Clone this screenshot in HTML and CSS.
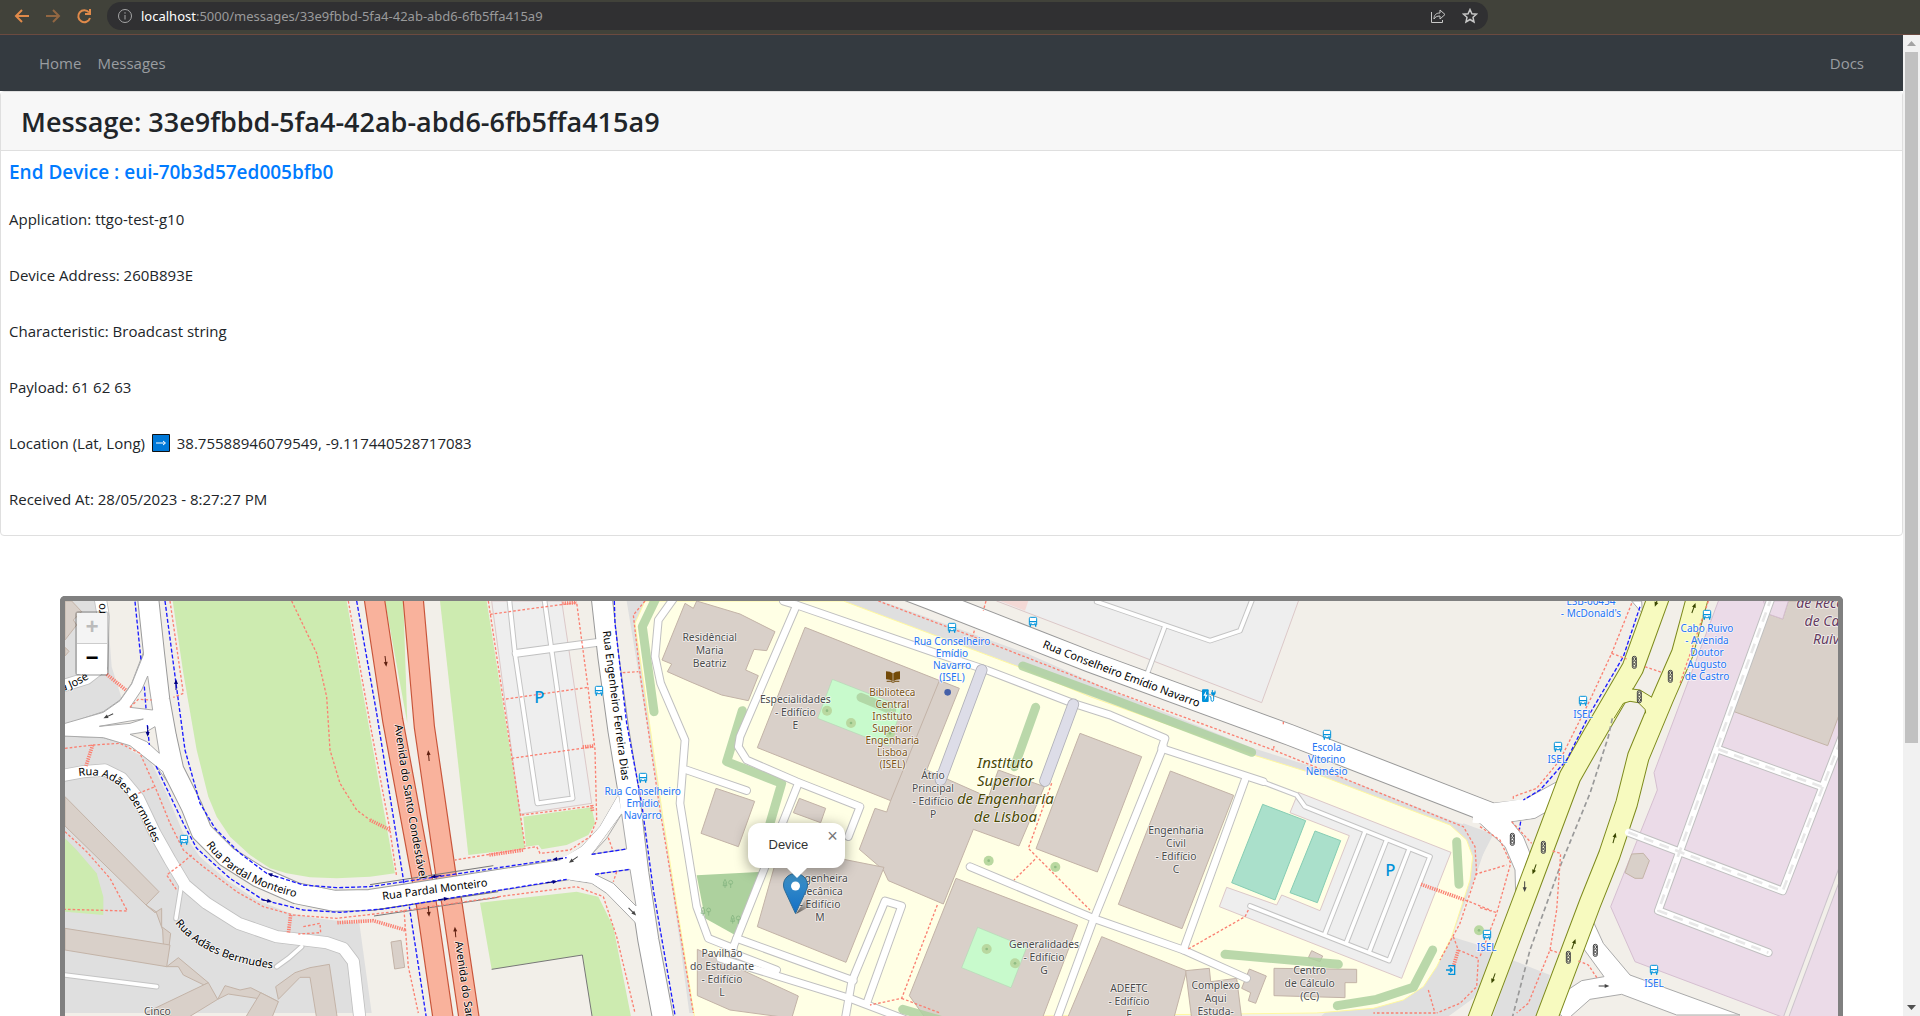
FILE: index.html
```html
<!DOCTYPE html>
<html lang="en">
<head>
<meta charset="utf-8">
<title>Message</title>
<link rel="stylesheet" href="styles.css">
</head>
<body>
<header class="toolbar">
  <button class="tool" aria-label="Back"><svg width="16" height="16" viewBox="0 0 16 16"><path d="M15 8H2M8 2L2 8l6 6"/></svg></button>
  <button class="tool tool-off" aria-label="Forward"><svg width="16" height="16" viewBox="0 0 16 16"><path d="M1 8h13M8 2l6 6-6 6"/></svg></button>
  <button class="tool" aria-label="Reload"><svg width="16" height="16" viewBox="0 0 16 16"><path d="M13 4.500A6 6 0 1 0 14 10M14 1v5H9"/></svg></button>
  <div class="address">
    <svg class="info" width="16" height="16" viewBox="0 0 16 16"><circle cx="8" cy="8" r="6.500"/><path d="M8 7v4.500M8 4.200v1.500"/></svg>
    <div class="url"><b>localhost</b>:5000/messages/33e9fbbd-5fa4-42ab-abd6-6fb5ffa415a9</div>
    <button class="tool tool-light" aria-label="Share"><svg width="16" height="16" viewBox="0 0 16 16"><path d="M1.500 4v10.500h11V12M4 11c0-4 2-6 6-6V2l5 4.500-5 4.500V8C7 8 5 9 4 11z"/></svg></button>
    <button class="tool tool-light" aria-label="Bookmark"><svg width="16" height="16" viewBox="0 0 16 16"><path stroke-width="1.500" d="M8 1.500l1.900 4.300 4.600.4-3.500 3.100 1 4.700-4-2.500-4 2.500 1-4.700L1.500 6.200l4.600-.4z"/></svg></button>
  </div>
</header>
<div class="window">
  <main class="page">
    <nav class="navbar">
      <a href="#home">Home</a>
      <a href="#messages">Messages</a>
      <a class="nav-end" href="#docs">Docs</a>
    </nav>
    <section class="card">
      <h3 class="card-header">Message: 33e9fbbd-5fa4-42ab-abd6-6fb5ffa415a9</h3>
      <div class="card-body">
        <h5><a href="#device">End Device : eui-70b3d57ed005bfb0</a></h5>
        <p>Application: ttgo-test-g10</p>
        <p>Device Address: 260B893E</p>
        <p>Characteristic: Broadcast string</p>
        <p>Payload: 61 62 63</p>
        <p>Location (Lat, Long) <svg class="arrow-box" width="18" height="18" viewBox="0 0 18 18"><path class="arrow-bg" d="M.5.5h17v17H.5z"/><path class="arrow-line" d="M4 9h9M11 7l2.500 2-2.500 2"/></svg> 38.75588946079549, -9.117440528717083</p>
        <p>Received At: 28/05/2023 - 8:27:27 PM</p>
      </div>
    </section>
    <section class="map">
      <svg id="map" class="map-canvas" viewBox="195 33 5319 1245" preserveAspectRatio="xMidYMin slice">
        <defs>
          <g id="bus"><path d="M-8-14H8q3 0 3 4V8H-11V-10q0-4 3-4z" fill="#fff" stroke="#0092da" stroke-width="3"/><path d="M-11-1H11M-8 8v6M8 8v6" stroke="#0092da" stroke-width="4"/><path d="M-8 5h4M4 5h4" stroke="#0092da" stroke-width="3"/></g>
          <g id="light" fill="none" stroke="#444" stroke-width="3"><rect x="-6" y="-18" width="12" height="36" rx="5" fill="#fff" fill-opacity=".4"/><circle cy="-10" r="4"/><circle r="4"/><circle cy="10" r="4"/></g>
          <g id="arrow"><path d="M-16 0H6" fill="none" stroke="currentColor" stroke-width="3"/><path d="M16 0L2-6V6z" fill="currentColor"/></g>
          <g id="trees" fill="none" stroke="#7fb07c" stroke-width="2"><path d="M-9 14V-2M-9-12l-5 10 2 0-3 9H-3L-6-2h2z"/><path d="M8 14V0M2-2a6 7 0 1 1 12 0q0 5-6 5t-6-5z"/></g>
        </defs>
      </svg>
      <div class="zoom">
        <button class="zoom-in" aria-label="Zoom in" disabled>+</button>
        <button class="zoom-out" aria-label="Zoom out">−</button>
      </div>
      <svg class="marker" width="44" height="42" viewBox="0 0 44 42">
        <defs>
          <linearGradient id="pin" x1="0" y1="0" x2="0" y2="1"><stop offset="0" stop-color="#3f93c8"/><stop offset="1" stop-color="#126fc6"/></linearGradient>
          <linearGradient id="shade" x1="0" y1="1" x2="1" y2="0"><stop offset="0" stop-color="#000" stop-opacity=".6"/><stop offset=".6" stop-color="#000" stop-opacity="0"/></linearGradient>
        </defs>
        <path d="M13 41L24 24Q38 16 38 22T13 41z" fill="url(#shade)"/>
        <path d="M12.500.5C6 .5.5 5.500.5 12c0 3 1 5 2 7l10 21.500 10-21.500c1-2 2-4 2-7C24.500 5.500 19 .5 12.500.5z" fill="url(#pin)" stroke="#2e6c97"/>
        <circle cx="12.500" cy="13" r="4.500" fill="#fff"/>
      </svg>
      <div class="popup">Device<button class="popup-close" aria-label="Close">×</button></div>
    </section>
  </main>
  <div class="scrollbar">
    <svg width="9" height="5" viewBox="0 0 9 5"><path fill="#a3a3a3" d="M0 5L4.500 0 9 5z"/></svg>
    <div class="track"><div class="thumb"></div></div>
    <svg width="9" height="5" viewBox="0 0 9 5"><path fill="#505050" d="M0 0h9L4.500 5z"/></svg>
  </div>
</div>
<script src="map.js"></script>
</body>
</html>
```

FILE: styles.css
```css
* { box-sizing: border-box; }
body {
  margin: 0;
  height: 100vh;
  display: flex;
  flex-direction: column;
  overflow: hidden;
  background: #fff;
  color: #212529;
  font: 16px/24px "Open Sans", "Noto Sans", sans-serif;
}
button { padding: 0; border: 0; background: none; font: inherit; }
a { text-decoration: none; }

.toolbar {
  flex: none;
  display: flex;
  align-items: center;
  gap: 15px;
  height: 35px;
  padding: 0 14px 2px;
  background: #41423a;
  border-bottom: 1px solid #6b4a40;
}
.tool { display: flex; fill: none; stroke: #e08a4a; stroke-width: 2; }
.tool-off { opacity: .5; }
.tool-light { stroke: #c8c8c8; stroke-width: 1; }
.address {
  display: flex;
  align-items: center;
  gap: 16px;
  width: 73%;
  height: 28px;
  padding: 0 10px;
  border-radius: 14px;
  background: #303032;
  color: #9a9a9b;
  font-family: "Noto Sans", sans-serif;
  font-size: 13px;
}
.info { fill: none; stroke: #a5a5a6; margin-right: -8px; stroke-width: 1; }
.url { flex: 1; white-space: nowrap; }
.url b { color: #fff; font-weight: 400; }

.window { flex: 1; min-height: 0; display: flex; }
.page { flex: 1; min-width: 0; display: flex; flex-direction: column; overflow: hidden; }
.navbar {
  flex: none;
  display: flex;
  gap: 16px;
  align-items: center;
  height: 56px;
  padding: 0 39px;
  background: #343a40;
}
.navbar a { color: #9a9da0; font-size: 15px; }
.nav-end { margin-left: auto; }

.card { flex: none; border: 1px solid #dfdfdf; border-radius: 4px; }
.card-header {
  margin: 0;
  padding: 13px 20px 11px;
  background: #f7f7f7;
  border-bottom: 1px solid #dfdfdf;
  font-size: 27px;
  line-height: 34px;
  font-weight: 600;
}
.card-body { padding: 9px 8px 8px; }
.card-body h5 { margin: 0 0 7px; font-size: 19px; line-height: 24px; font-weight: 600; }
.card-body a { color: #007bff; }
.card-body p { margin: 0; padding: 16px 0; font-size: 15px; line-height: 24px; }
.arrow-box { vertical-align: -3px; margin: 0 3px; }
.arrow-bg { fill: #0078d7; stroke: #111; stroke-width: 1; }
.arrow-line { fill: none; stroke: #fff; stroke-width: 1; }

.map {
  position: relative;
  flex: 1;
  min-height: 0;
  margin: 60px 60px 0;
  border: 5px solid #808080;
  border-bottom: 0;
  border-radius: 5px 5px 0 0;
  overflow: hidden;
  background: #f2efe9;
}
.map-canvas { display: block; width: 100%; height: 100%; font-family: "Noto Sans", "Open Sans", sans-serif; }
.zoom {
  position: absolute;
  left: 10px;
  top: 10px;
  display: flex;
  flex-direction: column;
  border: 2px solid rgba(0, 0, 0, .2);
  border-radius: 4px;
}
.zoom button {
  width: 30px;
  height: 30px;
  background: #fff;
  color: #000;
  font: bold 22px/32px "Liberation Mono", monospace;
}
.zoom .zoom-in { height: 31px; background: #f4f4f4; color: #bbb; border-bottom: 1px solid #ccc; }
.marker { position: absolute; left: calc(50% - 169px); top: 272px; }
.popup {
  position: absolute;
  left: calc(50% - 204px);
  top: 222px;
  width: 97px;
  height: 45px;
  padding: 13px 21px;
  border-radius: 12px;
  background: #fff;
  color: #333;
  font: 13px/18px "Liberation Sans", sans-serif;
  box-shadow: 0 3px 14px rgba(0, 0, 0, .4);
}
.popup::after {
  content: "";
  position: absolute;
  left: 39px;
  top: 45px;
  border: 10px solid transparent;
  border-top-color: #fff;
}
.popup-close { position: absolute; right: 0; top: 0; width: 24px; height: 24px; color: #757575; font: 18px/26px "Liberation Sans", sans-serif; }

.scrollbar {
  flex: none;
  display: flex;
  flex-direction: column;
  align-items: center;
  gap: 6px;
  width: 17px;
  padding: 6px 0;
  background: #f1f1f1;
}
.track { flex: 1; width: 13px; }
.thumb { height: 73%; background: #c1c1c1; }

/* areas */
.residential { fill: #dfdfdf; }
.park { fill: #cdebb0; }
.campus { fill: #ffffe5; stroke: #fff8a0; stroke-width: 3; }
.commerce { fill: #ebdbe8; stroke: #d5bfd0; stroke-width: 3; }
.retail { fill: #f4d9d6; }
.parking { fill: #eee; stroke: #dcc8c8; stroke-width: 3; }
.building { fill: #d9d0c9; stroke: #c3b3a7; stroke-width: 3; }
.garden { fill: #c8facc; stroke: #b5d6b5; stroke-width: 2; }
.pitch { fill: #aae0cb; stroke: #86cdb3; stroke-width: 3; }
.wood { fill: #add19e; }
.base { fill: #f2efe9; }
.hedge { fill: none; stroke: #aed1a0; stroke-opacity: .85; stroke-width: 27; stroke-linecap: round; stroke-linejoin: round; }
.tree { fill: #b9d8a0; }
.tree-dot { fill: #8fbc82; }
.hall { fill: none; stroke: #dddde8; stroke-width: 30; stroke-linecap: round; }
.hall-edge { fill: none; stroke: #b0b0b8; stroke-width: 35; stroke-linecap: round; }
.junction { fill: #fff; stroke: #aaa; stroke-width: 3; }
.island { fill: #f2efe9; stroke: #aaa; stroke-width: 3; }

/* lines */
.road, .edge { fill: none; stroke-linejoin: round; }
.aisle { stroke: #fff; stroke-width: 11; }
.aisle-edge { stroke: #c4c4c4; stroke-width: 17; stroke-linecap: round; }
.aisle, .service, .lane { stroke-linecap: round; }
.service { stroke: #fff; stroke-width: 20; }
.service-edge { stroke: #c0c0c0; stroke-width: 26; stroke-linecap: round; }
.lane { stroke: #fff; stroke-width: 34; }
.lane-edge { stroke: #c0c0c0; stroke-width: 39; stroke-linecap: round; }
.street { stroke: #fff; stroke-width: 60; }
.street-edge { stroke: #999; stroke-width: 66; }
.trunk { stroke: #f9b29c; stroke-width: 57; }
.trunk-edge { stroke: #c8553a; stroke-width: 64; }
.avenue { stroke: #f7fabf; stroke-width: 62; }
.avenue-edge { stroke: #7d8a1c; stroke-width: 68; }
.crossing { fill: #f7fabf; }
.kerb { stroke: #7d8a1c; stroke-width: 3; }
.foot { stroke: #fa8072; stroke-width: 4; stroke-dasharray: 8 6; }
.steps { stroke: #fa8072; stroke-width: 11; stroke-dasharray: 4 3; }
.cycle { stroke: #1a1aff; stroke-width: 4; stroke-dasharray: 12 6; }
.metro { stroke: #999; stroke-width: 5; stroke-dasharray: 15 9; }
.yard-dash { stroke: #e8e8e8; stroke-width: 8; stroke-dasharray: 30 20; }
.rail { stroke: #777; stroke-width: 3; }
.seam { stroke: #c3b3a7; stroke-width: 3; }
.rim { stroke: #ccc4cc; stroke-width: 18; }
.path { stroke: #f2efe9; stroke-width: 12; }

/* labels */
.label { text-anchor: middle; paint-order: stroke; stroke: #fff; stroke-opacity: .7; stroke-width: 5; stroke-linejoin: round; }
.name { fill: #4c4c4c; font-size: 31px; }
.stop { fill: #2474f5; font-size: 30px; }
.library { fill: #7b5518; font-size: 30px; }
.uni { fill: #4a4a05; font-size: 45px; font-style: italic; }
.yard { fill: #643a60; font-size: 42px; font-style: italic; }
.road-name { fill: #000; font-size: 33px; text-anchor: start; }
.letter { fill: #0092da; font-size: 50px; font-weight: 500; text-anchor: middle; }
```

FILE: map.js
```js
// Horizontal origins of the five map sheets, west to east.
const SHEETS = [150, 1200, 2220, 3270, 4440];
const layers = { area: '', edge: '', road: '', top: '', line: '', text: '' };
const put = (layer, sheet, body) => {
  layers[layer] += `<g transform="translate(${SHEETS[sheet]} 0)">${body}</g>`;
};
const area = (s, cls, pts, layer = 'area') => put(layer, s, `<polygon class="${cls}" points="${pts}"/>`);
const line = (s, cls, pts, layer = 'line') => put(layer, s, `<polyline class="road ${cls}" points="${pts}"/>`);
const road = (s, cls, pts, edge = 'edge', top = 'road') => {
  put(edge, s, `<polyline class="edge ${cls}-edge" points="${pts}"/>`);
  line(s, cls, pts, top);
};
const hedge = (s, pts) => put('area', s, `<polyline class="hedge" points="${pts}"/>`);
const tree = (s, x, y) => put('area', s, `<circle class="tree" cx="${x}" cy="${y}" r="15"/><circle class="tree-dot" cx="${x}" cy="${y}" r="4"/>`);
const icon = (s, id, x, y, turn = 0, color = '#333') =>
  put('text', s, `<use href="#${id}" color="${color}" transform="translate(${x} ${y}) rotate(${turn})"/>`);
const label = (s, cls, x, y, step, ...rows) =>
  put('text', s, rows.map((r, i) => `<text class="label ${cls}" x="${x}" y="${y + i * step}">${r}</text>`).join(''));
let count = 0;
const along = (s, d, text) => {
  const id = 'way' + count++;
  put('text', s, `<path id="${id}" d="${d}" fill="none"/><text class="label road-name"><textPath href="#${id}">${text}</textPath></text>`);
};

// --- Ground ---
area(0, 'residential', '45,33 170,33 185,230 215,325 240,480 300,510 345,600 400,730 450,800 530,870 620,930 720,970 800,985 928,1000 965,1269 45,1269');
area(0, 'park', '45,745 80,780 140,850 160,920 160,975 45,965');
area(0, 'park', '368,33 890,33 1035,850 960,860 860,865 780,862 710,850 660,835 600,795 540,740 500,680 475,620 440,480 400,250');
area(0, 'park', '1005,33 1060,33 1072,400');
area(1, 'park', '120,33 260,33 362,680 375,775 205,795');
area(1, 'park', '370,680 575,652 585,700 565,735 500,765 425,778 415,765 378,770');
area(1, 'park', '240,938 530,905 595,920 640,1010 695,1290 578,1290 547,1095 275,1138');
line(1, 'rail', '275,1138 547,1095 578,1290', 'area');
area(1, 'parking', '275,33 485,33 575,640 360,672');
area(1, 'residential', '680,33 745,33 710,90 730,260 790,690 885,1269 868,1269 840,1060 780,640');
area(2, 'residential', '310,33 425,33 860,190 1110,300 1540,475 1750,540 2130,690 2250,730 2210,850 2190,950 1900,900 1540,500 840,235');
area(3, 'residential', '1120,700 1210,733 1150,850 1130,1050 1215,1080 1215,1110 1150,1225 1060,1290 680,1290 900,1100 1100,800');
area(3, 'base', '1160,850 1215,770 1215,1080 1085,1040');
area(2, 'campus', '-285,33 -315,100 -290,270 -230,690 -135,1290 1730,1269 1900,1255 1990,1230 2050,1190 2090,1130 2135,1040 2190,870 2198,800 2180,750 2130,705 1750,560 1540,495 1050,320 840,232 310,33');
area(2, 'parking', '860,20 1680,20 1565,338 1050,140 770,33');
area(2, 'retail', '780,33 865,33 855,62');
area(4, 'commerce', '720,20 1090,20 1090,1350 465,1115 392,950 532,600 522,548');
area(4, 'residential', '97,1110 210,1155 165,1300 30,1300');

// --- Buildings ---
area(0, 'building', '45,620 327,905 288,945 45,708');
area(0, 'building', '288,945 315,968 335,955 335,1010 362,1030 357,1070 340,1065 338,1020 318,965');
area(0, 'building', '45,1015 360,1065 350,1130 45,1080');
area(0, 'building', '350,1130 385,1103 475,1178 462,1185 400,1155 385,1130');
area(0, 'building', '285,1269 475,1178 503,1228 410,1285');
area(0, 'building', '503,1228 525,1187 570,1200 602,1193 685,1235 620,1225 535,1212');
area(0, 'building', '585,1285 632,1208 685,1235 665,1285');
area(0, 'building', '677,1190 735,1148 780,1133 838,1123 862,1285 800,1285 780,1162 750,1162 685,1228');
area(0, 'building', '1023,1056 1053,1051 1064,1132 1034,1137');
area(0, 'building', '45,33 65,33 95,65 70,90 80,105 45,150');
area(0, 'building', '45,172 57,184 45,198');
area(1, 'building', '855,40 880,55 890,33 1020,72 1125,125 1100,182 1062,178 1037,240 1075,257 1045,332 965,315 870,275 802,245 815,222 786,210');
area(1, 'building', '948,595 1064,634 1015,770 903,730');
area(1, 'building', '892,1078 1195,1218 1175,1285 990,1260 892,1217');
area(2, 'building', '195,112 658,295 560,540 745,622 775,540 913,590 837,768 700,718 610,942 445,872 430,840 358,778 405,655 440,666 452,632 52,473');
line(2, 'seam', '598,272 452,632', 'area');
area(2, 'building', '178,625 257,655 242,698 160,668');
area(2, 'building', '120,770 432,832 318,1117 52,1010');
area(2, 'building', '648,865 1013,1005 905,1290 560,1290 508,1217');
area(2, 'building', '1020,430 1205,500 1072,846 888,776');
area(3, 'building', '241,543 431,616 276,1016 85,943');
area(3, 'building', '35,1040 290,1142 250,1290 -70,1290');
area(3, 'building', '287,1142 358,1135 362,1175 440,1165 455,1285 305,1285');
area(3, 'building', '478,1137 529,1158 497,1240 475,1232 482,1208 455,1195');
area(3, 'building', '552,1135 800,1138 800,1178 765,1178 765,1223 552,1217');
area(3, 'building', '665,1082 698,1098 690,1115 655,1103');
area(4, 'building', '865,72 908,87 925,33 1090,33 1090,340 1043,467 757,363');
area(4, 'building', '455,792 490,790 508,812 488,865 465,865 435,848');
area(4, 'commerce', '850,33 925,33 908,87 865,72');

// --- Green details, pitches ---
area(2, 'garden', '277,268 487,350 445,468 233,385');
area(2, 'garden', '713,1012 860,1072 813,1193 665,1133');
hedge(2, '363,322 455,360');
[[261, 362], [333, 399], [450, 430], [746, 812], [946, 831], [740, 1077], [825, 1120]].forEach(([x, y]) => tree(2, x, y));
tree(3, 1167, 1021);
area(1, 'wood', '890,856 1090,845 1005,1035 915,985');
hedge(1, '770,20 727,110 762,365');
hedge(1, '1027,362 980,515 1145,580 1110,700');
hedge(2, '887,352 823,530');
hedge(2, '848,228 1110,325 1535,487');
hedge(2, '488,1258 600,1290');
hedge(3, '1100,755 1107,883');
hedge(3, '405,1093 745,1123');
hedge(3, '1028,1080 970,1192 860,1228 742,1247');
area(3, 'parking', '625,607 1083,787 935,1165 388,950 410,892 560,945 575,915 690,962 778,737 600,668');
area(3, 'pitch', '518,643 647,692 555,930 425,878');
area(3, 'pitch', '675,723 752,752 682,938 600,908');

// --- Small roads ---
['327,20 345,190 412,640 518,625 432,20'].forEach(p => road(1, 'aisle', p));
road(1, 'service', '348,190 610,155');
['520,577 620,615 645,650 1020,800 897,1112 480,948', '825,725 705,1030', '890,750 770,1055', '957,778 838,1085',
  '20,35 360,152 450,122 490,20', '225,108 172,250'].forEach(p => road(3, 'aisle', p));
['825,20 775,90 765,200 782,280 855,450 840,640 890,950 925,1045 1000,1075', '860,540 1040,602', '1000,1090 1130,1140'].forEach(p => road(1, 'service', p));
['170,45 0,440 -5,470 20,510 170,575 360,650 325,740', '175,580 -20,1070', '130,33 170,45 590,190 740,240 1000,340 1110,375 1275,445 1265,475 1570,575',
  '1270,470 1060,990 950,1290', '1515,570 1330,1080', '690,830 1060,985 1330,1080 1520,1165', '-10,1045 340,1172', '-60,1105 330,1225 500,1290',
  '315,1290 335,1175 435,933 485,948 380,1240'].forEach(p => road(2, 'service', p));
['45,1155 320,1190', '378,985 395,880', '680,1130 715,1105 755,1070'].forEach(p => road(0, 'aisle', p));
road(0, 'lane', '20,560 100,545 165,540 215,565 265,625 315,730 360,810 405,885 470,940 565,1000 680,1040 830,1058 880,1075 910,1115 930,1290');
road(0, 'lane', '150,20 160,80 155,230 110,265 30,290');

// --- Streets ---
area(0, 'junction', '45,403 160,365 210,330 245,280 283,180 305,250 308,360 240,352 250,370 300,375 318,410 325,490 240,433 345,550 370,600 320,530 240,465 160,443 45,438', 'edge');
area(0, 'junction', '35,403 160,367 210,332 245,282 285,182 330,300 360,520 345,550 320,530 240,467 160,443 35,438', 'road');
area(0, 'island', '293,258 308,360 240,352 275,300', 'top');
area(0, 'island', '148,409 240,393 280,387 240,400', 'top');
area(0, 'island', '315,410 328,490 290,455 240,433 290,425', 'top');
road(0, 'street', '294,20 312,190 328,330 348,440 370,540 425,650 455,725 530,800 625,860 740,910 850,932 960,930 1060,915 1550,838 1750,805');
road(1, 'street', '605,20 625,200 655,420 688,620 715,850 745,1050 790,1290');
put('edge', 1, '<path class="junction" d="M655 615L600 710 545 770 490 805 510 870 575 880 620 910 720 1012 745 940 700 920 640 880 585 853 700 835 690 775 575 793 665 670z"/>');
put('road', 1, '<path fill="#fff" d="M655 615L600 710 545 770 480 808 500 868 575 878 620 907 718 1008 745 940 700 920 640 880 585 853 700 835 690 775 575 793 665 670z"/>');
area(1, 'island', '575,793 620,745 665,672 680,777', 'top');
area(1, 'island', '585,853 690,838 708,948 640,880', 'top');
road(2, 'street', '500,0 570,27 1050,215 1650,435 2250,668');
area(4, 'junction', '-20,638 25,641 130,630 240,570 200,665 165,685 95,695 130,740 150,790 107,910 105,840 75,770 0,700 -20,690', 'edge');
area(4, 'junction', '340,995 370,1060 450,1155 780,1275 590,1275 425,1213 330,1228 260,1290 235,1269 255,1205 305,1172 372,1160 310,1075', 'edge');
line(4, 'street', '-20,668 30,672 150,655', 'road');
area(4, 'junction', '455,33 485,33 487,70', 'edge');
road(4, 'avenue', '536,20 458,235 338,440 270,560 135,920 -5,1290');
road(4, 'avenue', '653,20 607,190 548,325 475,500 440,640 388,795 330,940 198,1290');
area(4, 'crossing', '440,285 457,297 480,300 516,322 545,330 500,368 495,358 475,338 450,334 430,340 405,378 385,360', 'road');
line(4, 'kerb', '456,297 480,300 516,322', 'road');
line(4, 'kerb', '402,385 430,340 450,334 475,338 495,358 497,370', 'road');
const yard = ['875,20 535,962 865,1088', '715,478 1025,590', '445,727 908,903 1090,430'];
yard.forEach(p => road(4, 'service', p));
yard.forEach(p => line(4, 'yard-dash', p, 'top'));
line(4, 'rim', '1090,820 915,1290', 'area');
line(4, 'path', '1090,820 915,1290', 'area');
line(4, 'metro', '397,385 385,440 330,610 240,830 150,1080 95,1290', 'top');

// --- Trunk road, below the bridge ---
road(1, 'trunk', '-78,20 -22,390 67,870 82,960 130,1290', 'area', 'area');
road(1, 'trunk', '39,20 73,410 137,850 155,935 208,1290', 'area', 'area');
line(1, 'rail', '-90,884 280,827');
line(1, 'rail', '-78,960 295,905');
line(1, 'rail', '-78,978 295,922');

// --- Cycle and foot paths ---
['255,35 273,210', '283,290 288,355', '292,405 298,465', '345,33 378,280 405,480 450,640 495,715 570,790 650,850 760,885 860,893 960,890 1550,803',
  '318,528 400,700 440,775 540,865 640,930 760,960 870,967 1000,957 1550,868', '920,33 980,370 1062,880', '1078,950 1130,1290'].forEach(p => line(0, 'cycle', p));
['643,33 645,100 680,400 725,640 760,900 825,1275', '575,793 680,777', '585,853 690,838'].forEach(p => line(1, 'cycle', p));
['480,50 430,200 330,370 260,510 180,600 130,630', '122,695 118,720'].forEach(p => line(4, 'cycle', p));
['360,33 400,310 370,322', '725,33 800,190 830,320 840,480 870,580 920,660 960,690', '895,33 960,400 1020,720 1040,860', '45,475 130,465 210,460 270,490 315,590 360,700 400,780 460,830 560,905 640,950 730,975 860,985 1060,962 1350,920',
  '240,352 265,328 305,330', '265,610 315,590', '45,725 110,785 180,865 232,963 45,958', '425,795 390,825 350,855 380,900', '760,1010 810,1000 812,1028 745,1032', '1062,960 1075,1130 1105,1269'].forEach(p => line(0, 'foot', p));
['170,253 230,302', '128,465 108,528', '722,975 715,1030', '960,690 1020,720', '862,998 970,992 1066,1020'].forEach(p => line(0, 'steps', p));
['265,33 310,330 362,680 375,770', '270,73 400,55 530,38 565,300 585,480 590,690 570,740 510,780 420,790 410,770 165,810', '318,327 565,292', '335,505 580,470', '365,675 578,648', '668,248 715,245', '735,33 700,75 720,250 780,660 880,1269',
  '295,920 530,890 610,920 650,1040 705,1269', '625,743 638,780', '650,845 640,875'].forEach(p => line(1, 'foot', p));
['487,40 530,38', '548,471 582,468', '268,795 370,780', '575,645 578,665'].forEach(p => line(1, 'steps', p));
['415,33 700,140 1110,300 1600,480 2170,710 2205,770 2210,850 2160,1000 2100,1110', '738,33 730,62', '703,122 698,140', '935,580 865,775 1050,960', '885,808 822,870', '592,945 485,1225 390,1245', '485,1225 600,1269'].forEach(p => line(2, 'foot', p));
['295,1077 465,980 475,960', '1125,930 1205,962', '1155,853 1250,825', '1090,1040 1105,1080 1165,1105 1160,1190 1110,1240 1040,1269', '1015,1200 1035,1269 850,1269', '580,395 580,403', '552,468 550,480'].forEach(p => line(3, 'foot', p));
['993,883 1125,930', '1105,1080 1090,1130'].forEach(p => line(3, 'steps', p));
['455,40 395,190 330,330 240,510 170,595 100,620 100,630', '395,190 440,207', '495,230 545,247', '685,33 600,280', '95,695 155,760', '218,783 242,790 230,960 210,1080 145,1240 110,1269', '210,1080 240,1090', '0,710 60,750 92,820 50,970 0,1100', '0,953 50,968', '295,1113 325,1125 352,1165'].forEach(p => line(4, 'foot', p));

// --- Covered walkways ---
put('top', 2, '<path class="hall-edge" d="M725 240L602 570M1000 343L915 573"/><path class="hall" d="M725 240L602 570M1000 343L915 573"/>');
put('top', 2, '<circle cx="623" cy="307" r="10" fill="#4560a8"/>');

// --- Icons ---
[[0, 402, 750], [1, 597, 303], [1, 729, 564], [2, 636, 114], [2, 879, 96], [3, 711, 435], [4, 681, 75], [4, 309, 333], [4, 234, 471], [4, 21, 1035], [4, 522, 1140]].forEach(([s, x, y]) => icon(s, 'bus', x, y));
[[463, 217], [571, 259], [478, 320], [97, 748], [190, 772], [265, 1102], [346, 1081]].forEach(([x, y]) => icon(4, 'light', x, y));
[[0, 175, 378, 155], [1, 520, 809, 145], [1, 697, 965, 45], [4, 134, 890, 90], [4, 372, 1188, 0]].forEach(a => icon(a[0], 'arrow', a[1], a[2], a[3], '#444'));
[[0, 293, 424, 90], [0, 378, 284, -90], [0, 668, 856, 200], [0, 650, 932, 10], [1, 473, 807, 175], [1, 456, 876, -8], [1, 108, 859, 172], [1, 130, 927, -8]].forEach(a => icon(a[0], 'arrow', a[1], a[2], a[3], '#00007f'));
[[0, 1007, 214, 83], [1, 86, 497, -95], [1, 86, 964, 85], [1, 166, 1026, -95]].forEach(a => icon(a[0], 'arrow', a[1], a[2], a[3], '#5f2011'));
[[530, 35, 110], [641, 54, -70], [403, 744, -75], [163, 838, 110], [281, 1062, -70], [40, 1165, 110]].forEach(a => icon(4, 'arrow', a[0], a[1], a[2], '#3a4700'));
[[984, 880], [918, 963], [1007, 987]].forEach(([x, y]) => icon(1, 'trees', x, y));
put('text', 2, '<path fill="#734a08" d="M438 244q14 0 20 6v24q-8-6-20-6zM480 244q-14 0-20 6v24q8-6 20-6z"/><path fill="none" stroke="#734a08" stroke-width="3" d="M440 274q12-2 19 3 8-5 19-3"/>');
put('text', 3, '<rect x="336" y="298" width="20" height="38" rx="3" fill="#0092da"/><path d="M349 302l-9 15h6l-2 13 9-16h-6z" fill="#fff"/><path d="M358 318q5 0 5 6v4q0 6 4 6t4-6v-14M367 300v8M375 302v6" fill="none" stroke="#0092da" stroke-width="3"/><path d="M363 307h14q0 9-7 9t-7-9z" fill="#0092da"/>');
put('text', 3, '<path d="M1077 1130v-3h17v26h-17v-4M1068 1140h18M1080 1133l7 7-7 7" fill="none" stroke="#0092da" stroke-width="4"/>');
put('text', 1, '<text class="letter" x="418" y="339">P</text>');
put('text', 3, '<text class="letter" x="901" y="857">P</text>');

// --- Labels ---
label(1, 'name', 929, 152, 39, 'Residêncial', 'Maria', 'Beatriz');
label(2, 'name', 166, 340, 39, 'Especialidades', '- Edifício', 'E');
label(1, 'name', 966, 1101, 39, 'Pavilhão', 'do Estudante', '- Edifício', 'L');
label(2, 'name', 579, 567, 39, 'Átrio', 'Principal', '- Edifício', 'P');
label(2, 'name', 240, 875, 39, 'Engenheira', 'Mecânica', '- Edifício', 'M');
label(2, 'name', 912, 1075, 39, 'Generalidades', '- Edifício', 'G');
label(3, 'name', 258, 733, 39, 'Engenharia', 'Civil', '- Edifício', 'C');
label(3, 'name', 117, 1206, 39, 'ADEETC', '- Edifício', 'F');
label(3, 'name', 377, 1196, 39, 'Complexo', 'Aqui', 'Estuda-');
label(3, 'name', 659, 1151, 39, 'Centro', 'de Cálculo', '(CC)');
label(0, 'name', 322, 1276, 39, 'Cinco');
label(2, 'library', 457, 317, 36, 'Biblioteca', 'Central', 'Instituto', 'Superior', 'Engenharia', 'Lisboa', '(ISEL)');
label(1, 'stop', 728, 614, 36, 'Rua Conselheiro', 'Emídio', 'Navarro');
label(2, 'stop', 636, 164, 36, 'Rua Conselheiro', 'Emídio', 'Navarro', '(ISEL)');
label(3, 'stop', 710, 484, 36, 'Escola', 'Vitorino', 'Nemésio');
label(4, 'stop', 333, 45, 36, 'LSB-00454', "- McDonald's");
label(4, 'stop', 681, 126, 36, 'Cabo Ruivo', '- Avenida', 'Doutor', 'Augusto', 'de Castro');
label(4, 'stop', 309, 384, 36, 'ISEL');
label(4, 'stop', 232, 520, 36, 'ISEL');
label(4, 'stop', 20, 1083, 36, 'ISEL');
label(4, 'stop', 522, 1190, 36, 'ISEL');
label(2, 'uni', 796, 534, 54, 'Instituto', 'Superior', 'de Engenharia', 'de Lisboa');
label(4, 'yard', 1050, 54, 54, 'de Recolha', 'de Cabo', 'Ruivo');
along(0, 'M86 558C180 545 215 590 245 635S290 710 320 780', 'Rua Adães Bermudes');
along(0, 'M375 1000Q470 1120 700 1138', 'Rua Adães Bermudes');
along(0, 'M468 765Q560 890 780 930', 'Rua Pardal Monteiro');
along(0, 'M998 930L1360 882', 'Rua Pardal Monteiro');
along(1, 'M608 124L675 640', 'Rua Engenheiro Ferreira Dias');
along(0, 'M1034 405Q1062 620 1120 930', 'Avenida do Santo Condestável');
along(1, 'M165 1055L235 1540', 'Avenida do Santo Condestável');
along(2, 'M906 172Q1060 235 1480 390', 'Rua Conselheiro Emídio Navarro');
along(0, 'M36 304Q90 290 150 240', 'a José');
along(0, 'M166 72L164 20', 'ro');

document.getElementById('map').insertAdjacentHTML('beforeend',
  ['area', 'edge', 'road', 'top', 'line', 'text'].map(k => `<g>${layers[k]}</g>`).join(''));
```
